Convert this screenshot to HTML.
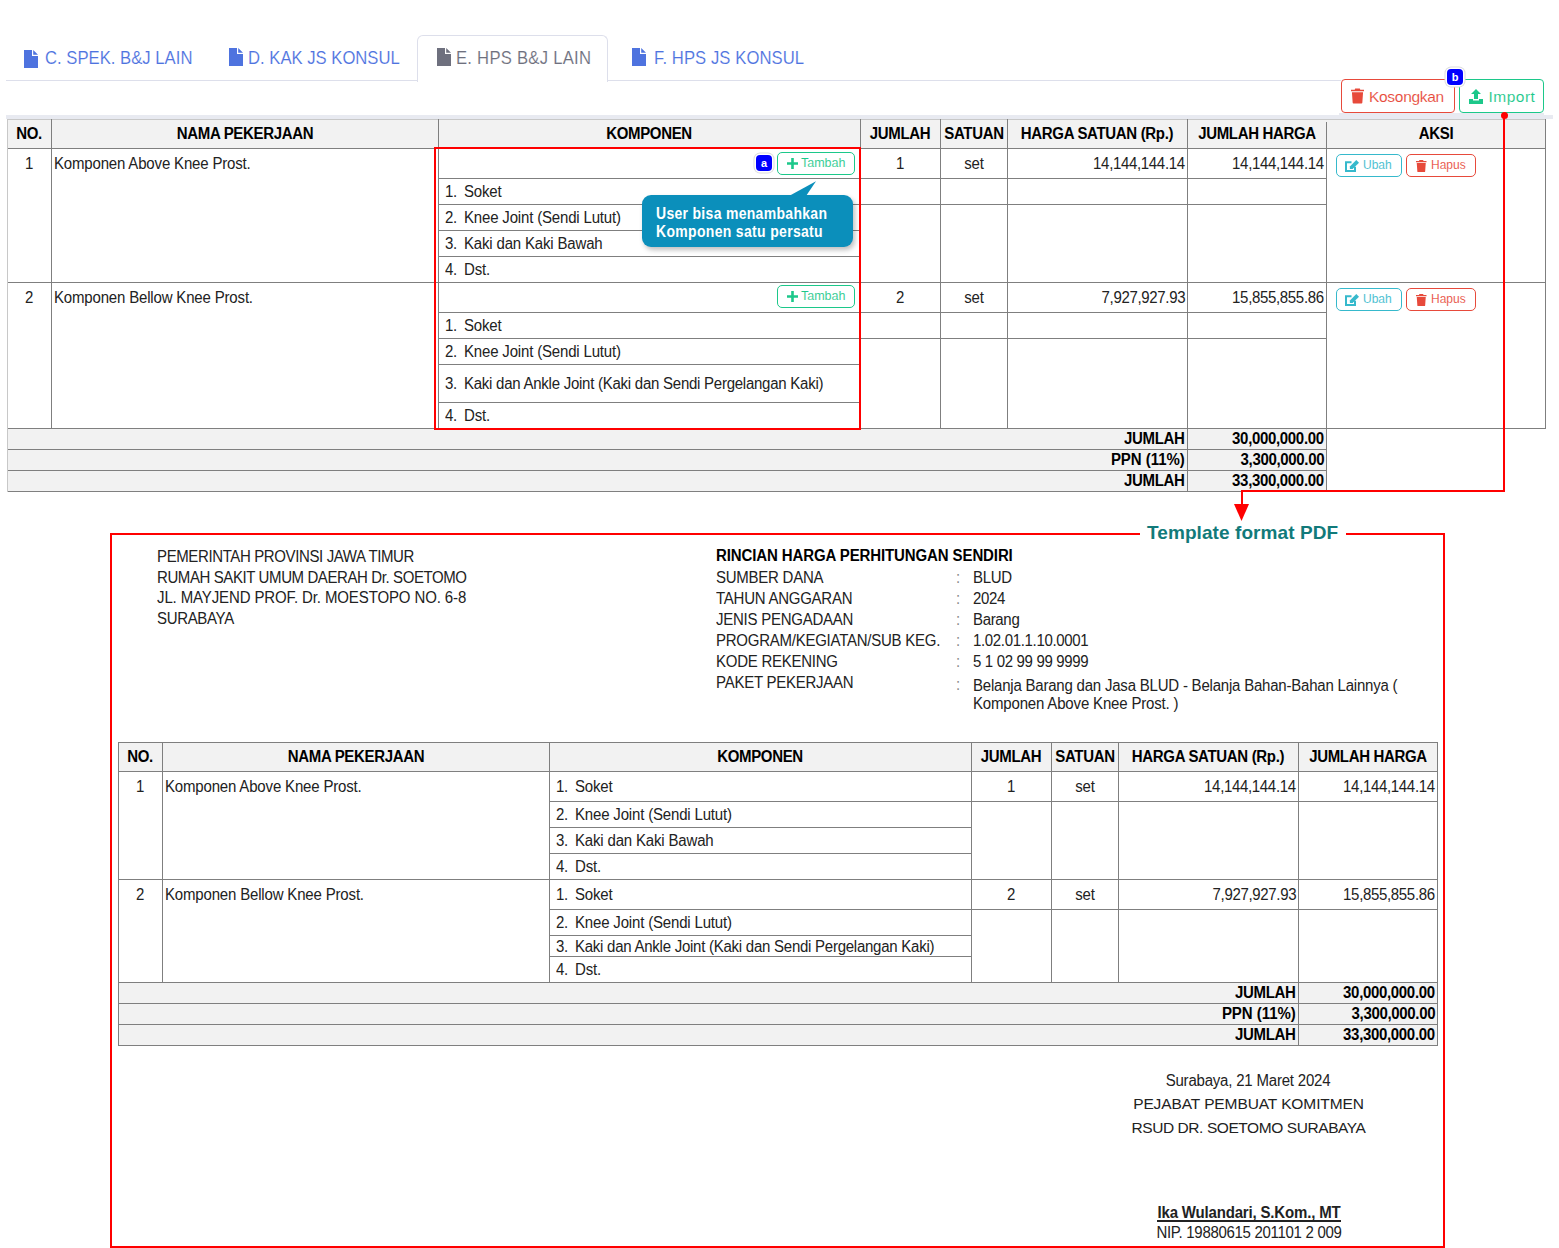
<!DOCTYPE html>
<html><head><meta charset="utf-8"><style>
html,body{margin:0;padding:0;background:#fff;}
body{width:1559px;height:1248px;position:relative;overflow:hidden;font-family:'Liberation Sans', sans-serif;}
body>div,body>svg{position:absolute;}
</style></head><body>
<div style="left:6px;top:80px;width:412px;height:1px;background:#dddfeb;"></div>
<div style="left:607px;top:80px;width:734px;height:1px;background:#dddfeb;"></div>
<div style="left:417px;top:35px;width:189px;height:46px;border:1px solid #dddfeb;border-bottom:none;border-radius:6px 6px 0 0;background:#fff"></div>
<svg style="left:24px;top:50px" width="14" height="18" viewBox="0 0 14 18"><path d="M0 0H8V6H14V18H0Z M9.2 0L14 4.8H9.2Z" fill="#4e73df"/></svg>
<div style="left:44.5px;top:48.54px;font-size:18.500px;line-height:18.500px;font-weight:400;color:#4e73df;letter-spacing:0.020px;font-family:'Liberation Sans', sans-serif;white-space:nowrap;transform:scaleX(0.9);transform-origin:0 0;-webkit-text-stroke:0.12px #fff;">C. SPEK. B&amp;J LAIN</div>
<svg style="left:229px;top:48px" width="14" height="18" viewBox="0 0 14 18"><path d="M0 0H8V6H14V18H0Z M9.2 0L14 4.8H9.2Z" fill="#4e73df"/></svg>
<div style="left:247.5px;top:48.54px;font-size:18.500px;line-height:18.500px;font-weight:400;color:#4e73df;letter-spacing:0.000px;font-family:'Liberation Sans', sans-serif;white-space:nowrap;transform:scaleX(0.9);transform-origin:0 0;-webkit-text-stroke:0.12px #fff;">D. KAK JS KONSUL</div>
<svg style="left:437px;top:48px" width="14" height="18" viewBox="0 0 14 18"><path d="M0 0H8V6H14V18H0Z M9.2 0L14 4.8H9.2Z" fill="#6e707e"/></svg>
<div style="left:456px;top:48.54px;font-size:18.500px;line-height:18.500px;font-weight:400;color:#6e707e;letter-spacing:0.280px;font-family:'Liberation Sans', sans-serif;white-space:nowrap;transform:scaleX(0.9);transform-origin:0 0;-webkit-text-stroke:0.12px #fff;">E. HPS B&amp;J LAIN</div>
<svg style="left:632px;top:48px" width="14" height="18" viewBox="0 0 14 18"><path d="M0 0H8V6H14V18H0Z M9.2 0L14 4.8H9.2Z" fill="#4e73df"/></svg>
<div style="left:654px;top:48.54px;font-size:18.500px;line-height:18.500px;font-weight:400;color:#4e73df;letter-spacing:0.080px;font-family:'Liberation Sans', sans-serif;white-space:nowrap;transform:scaleX(0.9);transform-origin:0 0;-webkit-text-stroke:0.12px #fff;">F. HPS JS KONSUL</div>
<div style="left:6px;top:115px;width:1547px;height:4px;background:#e8eaf1;"></div>
<div style="left:1339px;top:113px;width:205px;height:2px;background:#e8eaf1;"></div>
<div style="left:7px;top:119px;width:1538px;height:29px;background:#f2f2f2;"></div>
<div style="left:7px;top:149px;width:1538px;height:279px;background:#fff;"></div>
<div style="left:7px;top:428px;width:1319px;height:63px;background:#f2f2f2;"></div>
<div style="left:7px;top:119px;width:1538px;height:1px;background:#c8c8c8;"></div>
<div style="left:7px;top:148px;width:1538px;height:1px;background:#7f7f7f;"></div>
<div style="left:7px;top:282px;width:1538px;height:1px;background:#7f7f7f;"></div>
<div style="left:7px;top:428px;width:1538px;height:1px;background:#7f7f7f;"></div>
<div style="left:438px;top:178px;width:422px;height:1px;background:#7f7f7f;"></div>
<div style="left:438px;top:204px;width:422px;height:1px;background:#7f7f7f;"></div>
<div style="left:438px;top:230px;width:422px;height:1px;background:#7f7f7f;"></div>
<div style="left:438px;top:256px;width:422px;height:1px;background:#7f7f7f;"></div>
<div style="left:438px;top:312px;width:422px;height:1px;background:#7f7f7f;"></div>
<div style="left:438px;top:338px;width:422px;height:1px;background:#7f7f7f;"></div>
<div style="left:438px;top:364px;width:422px;height:1px;background:#7f7f7f;"></div>
<div style="left:438px;top:402px;width:422px;height:1px;background:#7f7f7f;"></div>
<div style="left:860px;top:178px;width:466px;height:1px;background:#7f7f7f;"></div>
<div style="left:860px;top:204px;width:466px;height:1px;background:#7f7f7f;"></div>
<div style="left:860px;top:312px;width:466px;height:1px;background:#7f7f7f;"></div>
<div style="left:860px;top:338px;width:466px;height:1px;background:#7f7f7f;"></div>
<div style="left:7px;top:449px;width:1319px;height:1px;background:#7f7f7f;"></div>
<div style="left:7px;top:470px;width:1319px;height:1px;background:#7f7f7f;"></div>
<div style="left:7px;top:491px;width:1320px;height:1px;background:#7f7f7f;"></div>
<div style="left:7px;top:119px;width:1px;height:373px;background:#c8c8c8;"></div>
<div style="left:51px;top:119px;width:1px;height:309px;background:#7f7f7f;"></div>
<div style="left:438px;top:119px;width:1px;height:309px;background:#7f7f7f;"></div>
<div style="left:860px;top:119px;width:1px;height:309px;background:#7f7f7f;"></div>
<div style="left:940px;top:119px;width:1px;height:309px;background:#7f7f7f;"></div>
<div style="left:1007px;top:119px;width:1px;height:309px;background:#7f7f7f;"></div>
<div style="left:1187px;top:119px;width:1px;height:373px;background:#7f7f7f;"></div>
<div style="left:1326px;top:122px;width:1px;height:370px;background:#7f7f7f;"></div>
<div style="left:1545px;top:119px;width:1px;height:310px;background:#7f7f7f;"></div>
<div style="left:-571px;width:1200px;text-align:center;top:126.46px;font-size:16.000px;line-height:16.000px;font-weight:700;color:#000;letter-spacing:-0.352px;font-family:'Liberation Sans', sans-serif;white-space:nowrap;transform:scaleX(0.9375);transform-origin:50% 0;">NO.</div>
<div style="left:-355.5px;width:1200px;text-align:center;top:126.46px;font-size:16.000px;line-height:16.000px;font-weight:700;color:#000;letter-spacing:-0.352px;font-family:'Liberation Sans', sans-serif;white-space:nowrap;transform:scaleX(0.9375);transform-origin:50% 0;">NAMA PEKERJAAN</div>
<div style="left:49px;width:1200px;text-align:center;top:126.46px;font-size:16.000px;line-height:16.000px;font-weight:700;color:#000;letter-spacing:-0.352px;font-family:'Liberation Sans', sans-serif;white-space:nowrap;transform:scaleX(0.9375);transform-origin:50% 0;">KOMPONEN</div>
<div style="left:300px;width:1200px;text-align:center;top:126.46px;font-size:16.000px;line-height:16.000px;font-weight:700;color:#000;letter-spacing:-0.352px;font-family:'Liberation Sans', sans-serif;white-space:nowrap;transform:scaleX(0.9375);transform-origin:50% 0;">JUMLAH</div>
<div style="left:373.5px;width:1200px;text-align:center;top:126.46px;font-size:16.000px;line-height:16.000px;font-weight:700;color:#000;letter-spacing:-0.352px;font-family:'Liberation Sans', sans-serif;white-space:nowrap;transform:scaleX(0.9375);transform-origin:50% 0;">SATUAN</div>
<div style="left:497px;width:1200px;text-align:center;top:126.46px;font-size:16.000px;line-height:16.000px;font-weight:700;color:#000;letter-spacing:-0.352px;font-family:'Liberation Sans', sans-serif;white-space:nowrap;transform:scaleX(0.9375);transform-origin:50% 0;">HARGA SATUAN (Rp.)</div>
<div style="left:656.5px;width:1200px;text-align:center;top:126.46px;font-size:16.000px;line-height:16.000px;font-weight:700;color:#000;letter-spacing:-0.352px;font-family:'Liberation Sans', sans-serif;white-space:nowrap;transform:scaleX(0.9375);transform-origin:50% 0;">JUMLAH HARGA</div>
<div style="left:835.5px;width:1200px;text-align:center;top:126.46px;font-size:16.000px;line-height:16.000px;font-weight:700;color:#000;letter-spacing:-0.352px;font-family:'Liberation Sans', sans-serif;white-space:nowrap;transform:scaleX(0.9375);transform-origin:50% 0;">AKSI</div>
<div style="left:-571px;width:1200px;text-align:center;top:156.46px;font-size:16.000px;line-height:16.000px;font-weight:400;color:#222;letter-spacing:-0.352px;font-family:'Liberation Sans', sans-serif;white-space:nowrap;transform:scaleX(0.9375);transform-origin:50% 0;">1</div>
<div style="left:54px;top:156.46px;font-size:16.000px;line-height:16.000px;font-weight:400;color:#222;letter-spacing:-0.181px;font-family:'Liberation Sans', sans-serif;white-space:nowrap;transform:scaleX(0.9375);transform-origin:0 0;">Komponen Above Knee Prost.</div>
<div style="left:445px;top:184.46px;font-size:16.000px;line-height:16.000px;font-weight:400;color:#222;letter-spacing:-0.352px;font-family:'Liberation Sans', sans-serif;white-space:nowrap;transform:scaleX(0.9375);transform-origin:0 0;">1.</div>
<div style="left:464px;top:184.46px;font-size:16.000px;line-height:16.000px;font-weight:400;color:#222;letter-spacing:-0.181px;font-family:'Liberation Sans', sans-serif;white-space:nowrap;transform:scaleX(0.9375);transform-origin:0 0;">Soket</div>
<div style="left:445px;top:210.46px;font-size:16.000px;line-height:16.000px;font-weight:400;color:#222;letter-spacing:-0.352px;font-family:'Liberation Sans', sans-serif;white-space:nowrap;transform:scaleX(0.9375);transform-origin:0 0;">2.</div>
<div style="left:464px;top:210.46px;font-size:16.000px;line-height:16.000px;font-weight:400;color:#222;letter-spacing:-0.181px;font-family:'Liberation Sans', sans-serif;white-space:nowrap;transform:scaleX(0.9375);transform-origin:0 0;">Knee Joint (Sendi Lutut)</div>
<div style="left:445px;top:236.46px;font-size:16.000px;line-height:16.000px;font-weight:400;color:#222;letter-spacing:-0.352px;font-family:'Liberation Sans', sans-serif;white-space:nowrap;transform:scaleX(0.9375);transform-origin:0 0;">3.</div>
<div style="left:464px;top:236.46px;font-size:16.000px;line-height:16.000px;font-weight:400;color:#222;letter-spacing:-0.181px;font-family:'Liberation Sans', sans-serif;white-space:nowrap;transform:scaleX(0.9375);transform-origin:0 0;">Kaki dan Kaki Bawah</div>
<div style="left:445px;top:262.46px;font-size:16.000px;line-height:16.000px;font-weight:400;color:#222;letter-spacing:-0.352px;font-family:'Liberation Sans', sans-serif;white-space:nowrap;transform:scaleX(0.9375);transform-origin:0 0;">4.</div>
<div style="left:464px;top:262.46px;font-size:16.000px;line-height:16.000px;font-weight:400;color:#222;letter-spacing:-0.181px;font-family:'Liberation Sans', sans-serif;white-space:nowrap;transform:scaleX(0.9375);transform-origin:0 0;">Dst.</div>
<div style="left:300px;width:1200px;text-align:center;top:156.46px;font-size:16.000px;line-height:16.000px;font-weight:400;color:#222;letter-spacing:-0.352px;font-family:'Liberation Sans', sans-serif;white-space:nowrap;transform:scaleX(0.9375);transform-origin:50% 0;">1</div>
<div style="left:373.5px;width:1200px;text-align:center;top:156.46px;font-size:16.000px;line-height:16.000px;font-weight:400;color:#222;letter-spacing:-0.181px;font-family:'Liberation Sans', sans-serif;white-space:nowrap;transform:scaleX(0.9375);transform-origin:50% 0;">set</div>
<div style="right:374px;top:156.46px;font-size:16.000px;line-height:16.000px;font-weight:400;color:#222;letter-spacing:-0.352px;font-family:'Liberation Sans', sans-serif;white-space:nowrap;transform:scaleX(0.9375);transform-origin:100% 0;">14,144,144.14</div>
<div style="right:235px;top:156.46px;font-size:16.000px;line-height:16.000px;font-weight:400;color:#222;letter-spacing:-0.352px;font-family:'Liberation Sans', sans-serif;white-space:nowrap;transform:scaleX(0.9375);transform-origin:100% 0;">14,144,144.14</div>
<div style="left:-571px;width:1200px;text-align:center;top:290.46px;font-size:16.000px;line-height:16.000px;font-weight:400;color:#222;letter-spacing:-0.352px;font-family:'Liberation Sans', sans-serif;white-space:nowrap;transform:scaleX(0.9375);transform-origin:50% 0;">2</div>
<div style="left:54px;top:290.46px;font-size:16.000px;line-height:16.000px;font-weight:400;color:#222;letter-spacing:-0.181px;font-family:'Liberation Sans', sans-serif;white-space:nowrap;transform:scaleX(0.9375);transform-origin:0 0;">Komponen Bellow Knee Prost.</div>
<div style="left:445px;top:318.46px;font-size:16.000px;line-height:16.000px;font-weight:400;color:#222;letter-spacing:-0.352px;font-family:'Liberation Sans', sans-serif;white-space:nowrap;transform:scaleX(0.9375);transform-origin:0 0;">1.</div>
<div style="left:464px;top:318.46px;font-size:16.000px;line-height:16.000px;font-weight:400;color:#222;letter-spacing:-0.181px;font-family:'Liberation Sans', sans-serif;white-space:nowrap;transform:scaleX(0.9375);transform-origin:0 0;">Soket</div>
<div style="left:445px;top:344.46px;font-size:16.000px;line-height:16.000px;font-weight:400;color:#222;letter-spacing:-0.352px;font-family:'Liberation Sans', sans-serif;white-space:nowrap;transform:scaleX(0.9375);transform-origin:0 0;">2.</div>
<div style="left:464px;top:344.46px;font-size:16.000px;line-height:16.000px;font-weight:400;color:#222;letter-spacing:-0.181px;font-family:'Liberation Sans', sans-serif;white-space:nowrap;transform:scaleX(0.9375);transform-origin:0 0;">Knee Joint (Sendi Lutut)</div>
<div style="left:445px;top:376.46px;font-size:16.000px;line-height:16.000px;font-weight:400;color:#222;letter-spacing:-0.352px;font-family:'Liberation Sans', sans-serif;white-space:nowrap;transform:scaleX(0.9375);transform-origin:0 0;">3.</div>
<div style="left:464px;top:376.46px;font-size:16.000px;line-height:16.000px;font-weight:400;color:#222;letter-spacing:-0.267px;font-family:'Liberation Sans', sans-serif;white-space:nowrap;transform:scaleX(0.9375);transform-origin:0 0;">Kaki dan Ankle Joint (Kaki dan Sendi Pergelangan Kaki)</div>
<div style="left:445px;top:408.46px;font-size:16.000px;line-height:16.000px;font-weight:400;color:#222;letter-spacing:-0.352px;font-family:'Liberation Sans', sans-serif;white-space:nowrap;transform:scaleX(0.9375);transform-origin:0 0;">4.</div>
<div style="left:464px;top:408.46px;font-size:16.000px;line-height:16.000px;font-weight:400;color:#222;letter-spacing:-0.181px;font-family:'Liberation Sans', sans-serif;white-space:nowrap;transform:scaleX(0.9375);transform-origin:0 0;">Dst.</div>
<div style="left:300px;width:1200px;text-align:center;top:290.46px;font-size:16.000px;line-height:16.000px;font-weight:400;color:#222;letter-spacing:-0.352px;font-family:'Liberation Sans', sans-serif;white-space:nowrap;transform:scaleX(0.9375);transform-origin:50% 0;">2</div>
<div style="left:373.5px;width:1200px;text-align:center;top:290.46px;font-size:16.000px;line-height:16.000px;font-weight:400;color:#222;letter-spacing:-0.181px;font-family:'Liberation Sans', sans-serif;white-space:nowrap;transform:scaleX(0.9375);transform-origin:50% 0;">set</div>
<div style="right:374px;top:290.46px;font-size:16.000px;line-height:16.000px;font-weight:400;color:#222;letter-spacing:-0.352px;font-family:'Liberation Sans', sans-serif;white-space:nowrap;transform:scaleX(0.9375);transform-origin:100% 0;">7,927,927.93</div>
<div style="right:235px;top:290.46px;font-size:16.000px;line-height:16.000px;font-weight:400;color:#222;letter-spacing:-0.352px;font-family:'Liberation Sans', sans-serif;white-space:nowrap;transform:scaleX(0.9375);transform-origin:100% 0;">15,855,855.86</div>
<div style="right:374px;top:431.46px;font-size:16.000px;line-height:16.000px;font-weight:700;color:#000;letter-spacing:-0.352px;font-family:'Liberation Sans', sans-serif;white-space:nowrap;transform:scaleX(0.9375);transform-origin:100% 0;">JUMLAH</div>
<div style="right:235px;top:431.46px;font-size:16.000px;line-height:16.000px;font-weight:700;color:#000;letter-spacing:-0.352px;font-family:'Liberation Sans', sans-serif;white-space:nowrap;transform:scaleX(0.9375);transform-origin:100% 0;">30,000,000.00</div>
<div style="right:374px;top:452.46px;font-size:16.000px;line-height:16.000px;font-weight:700;color:#000;letter-spacing:-0.053px;font-family:'Liberation Sans', sans-serif;white-space:nowrap;transform:scaleX(0.9375);transform-origin:100% 0;">PPN (11%)</div>
<div style="right:235px;top:452.46px;font-size:16.000px;line-height:16.000px;font-weight:700;color:#000;letter-spacing:-0.352px;font-family:'Liberation Sans', sans-serif;white-space:nowrap;transform:scaleX(0.9375);transform-origin:100% 0;">3,300,000.00</div>
<div style="right:374px;top:473.46px;font-size:16.000px;line-height:16.000px;font-weight:700;color:#000;letter-spacing:-0.352px;font-family:'Liberation Sans', sans-serif;white-space:nowrap;transform:scaleX(0.9375);transform-origin:100% 0;">JUMLAH</div>
<div style="right:235px;top:473.46px;font-size:16.000px;line-height:16.000px;font-weight:700;color:#000;letter-spacing:-0.352px;font-family:'Liberation Sans', sans-serif;white-space:nowrap;transform:scaleX(0.9375);transform-origin:100% 0;">33,300,000.00</div>
<div style="left:777px;top:152px;width:76px;height:21px;border:1px solid #1cc88a;border-radius:5px;background:#fff"></div>
<svg style="left:786.5px;top:157.5px" width="11" height="11" viewBox="0 0 11 11"><path d="M4.2 0H6.8V4.2H11V6.8H6.8V11H4.2V6.8H0V4.2H4.2Z" fill="#1cc88a"/></svg>
<div style="left:801px;top:157.42px;font-size:12.500px;line-height:12.500px;font-weight:400;color:#1cc88a;letter-spacing:0.000px;font-family:'Liberation Sans', sans-serif;white-space:nowrap;-webkit-text-stroke:0.1px #fff;">Tambah</div>
<div style="left:777px;top:285px;width:76px;height:21px;border:1px solid #1cc88a;border-radius:5px;background:#fff"></div>
<svg style="left:786.5px;top:290.5px" width="11" height="11" viewBox="0 0 11 11"><path d="M4.2 0H6.8V4.2H11V6.8H6.8V11H4.2V6.8H0V4.2H4.2Z" fill="#1cc88a"/></svg>
<div style="left:801px;top:290.42px;font-size:12.500px;line-height:12.500px;font-weight:400;color:#1cc88a;letter-spacing:0.000px;font-family:'Liberation Sans', sans-serif;white-space:nowrap;-webkit-text-stroke:0.1px #fff;">Tambah</div>
<div style="left:1336px;top:154px;width:64px;height:21px;border:1px solid #36b9cc;border-radius:5px;background:#fff"></div>
<svg style="left:1345px;top:160px" width="14" height="12" viewBox="0 0 14 12"><path d="M11.3 0L14 2.7L7.6 9.1H4.9V6.4Z" fill="#36b9cc"/><path d="M6.5 2.2H1V11H10V6.8" fill="none" stroke="#36b9cc" stroke-width="2"/></svg>
<div style="left:1363px;top:159.44px;font-size:12.000px;line-height:12.000px;font-weight:400;color:#36b9cc;letter-spacing:0.000px;font-family:'Liberation Sans', sans-serif;white-space:nowrap;-webkit-text-stroke:0.1px #fff;">Ubah</div>
<div style="left:1406px;top:154px;width:68px;height:21px;border:1px solid #e74a3b;border-radius:5px;background:#fff"></div>
<svg style="left:1416px;top:159.5px" width="10.5" height="12" viewBox="0 0 14 16"><path d="M4.5 0H9.5L10 1.2H14V3H0V1.2H4Z M1 4H13L12.2 15.2Q12.1 16 11.3 16H2.7Q1.9 16 1.8 15.2Z" fill="#e74a3b"/></svg>
<div style="left:1431px;top:159.44px;font-size:12.000px;line-height:12.000px;font-weight:400;color:#e74a3b;letter-spacing:0.000px;font-family:'Liberation Sans', sans-serif;white-space:nowrap;-webkit-text-stroke:0.1px #fff;">Hapus</div>
<div style="left:1336px;top:288px;width:64px;height:21px;border:1px solid #36b9cc;border-radius:5px;background:#fff"></div>
<svg style="left:1345px;top:294px" width="14" height="12" viewBox="0 0 14 12"><path d="M11.3 0L14 2.7L7.6 9.1H4.9V6.4Z" fill="#36b9cc"/><path d="M6.5 2.2H1V11H10V6.8" fill="none" stroke="#36b9cc" stroke-width="2"/></svg>
<div style="left:1363px;top:293.44px;font-size:12.000px;line-height:12.000px;font-weight:400;color:#36b9cc;letter-spacing:0.000px;font-family:'Liberation Sans', sans-serif;white-space:nowrap;-webkit-text-stroke:0.1px #fff;">Ubah</div>
<div style="left:1406px;top:288px;width:68px;height:21px;border:1px solid #e74a3b;border-radius:5px;background:#fff"></div>
<svg style="left:1416px;top:293.5px" width="10.5" height="12" viewBox="0 0 14 16"><path d="M4.5 0H9.5L10 1.2H14V3H0V1.2H4Z M1 4H13L12.2 15.2Q12.1 16 11.3 16H2.7Q1.9 16 1.8 15.2Z" fill="#e74a3b"/></svg>
<div style="left:1431px;top:293.44px;font-size:12.000px;line-height:12.000px;font-weight:400;color:#e74a3b;letter-spacing:0.000px;font-family:'Liberation Sans', sans-serif;white-space:nowrap;-webkit-text-stroke:0.1px #fff;">Hapus</div>
<div style="left:1341px;top:79px;width:112px;height:32px;border:1px solid #e74a3b;border-radius:4px;background:#fff"></div>
<svg style="left:1351px;top:88px" width="13" height="16" viewBox="0 0 14 16"><path d="M4.5 0H9.5L10 1.2H14V3H0V1.2H4Z M1 4H13L12.2 15.2Q12.1 16 11.3 16H2.7Q1.9 16 1.8 15.2Z" fill="#e74a3b"/></svg>
<div style="left:1369px;top:88.88px;font-size:15.500px;line-height:15.500px;font-weight:400;color:#e74a3b;letter-spacing:-0.300px;font-family:'Liberation Sans', sans-serif;white-space:nowrap;-webkit-text-stroke:0.1px #fff;">Kosongkan</div>
<div style="left:1459px;top:79px;width:83px;height:32px;border:1px solid #1cc88a;border-radius:4px;background:#fff"></div>
<svg style="left:1469px;top:89px" width="14" height="15" viewBox="0 0 14 15"><path d="M7 0L12 5H9V10H5V5H2Z M0 10H4V11.5H10V10H14V15H0Z" fill="#1cc88a"/></svg>
<div style="left:1488.5px;top:88.88px;font-size:15.500px;line-height:15.500px;font-weight:400;color:#1cc88a;letter-spacing:0.500px;font-family:'Liberation Sans', sans-serif;white-space:nowrap;-webkit-text-stroke:0.1px #fff;">Import</div>
<div style="left:756px;top:155px;width:16px;height:16px;border-radius:4px;background:#0000ff;box-shadow:0 0 0 1.5px #fff,0 0 0 2.5px #dcdcdc;color:#fff;font:bold 11px/16px 'Liberation Sans', sans-serif;text-align:center">a</div>
<div style="left:1447px;top:69px;width:16px;height:16px;border-radius:4px;background:#0000ff;box-shadow:0 0 0 1.5px #fff,0 0 0 2.5px #dcdcdc;color:#fff;font:bold 11px/16px 'Liberation Sans', sans-serif;text-align:center">b</div>
<div style="left:642px;top:195px;width:211px;height:52px;background:#0b8fbb;border-radius:9px;box-shadow:2px 3px 5px rgba(0,0,0,0.25)"></div>
<svg style="left:780px;top:180px" width="40" height="20" viewBox="0 0 40 20"><path d="M9 16L36 1.2L26 16Z" fill="#0b8fbb"/></svg>
<div style="left:656px;top:207.15px;font-size:14.000px;line-height:14.000px;font-weight:700;color:#fff;letter-spacing:0.300px;font-family:'Liberation Sans', sans-serif;white-space:nowrap;transform:scaleY(1.12);transform-origin:0 11.85px;">User bisa menambahkan</div>
<div style="left:656px;top:225.15px;font-size:14.000px;line-height:14.000px;font-weight:700;color:#fff;letter-spacing:0.320px;font-family:'Liberation Sans', sans-serif;white-space:nowrap;transform:scaleY(1.12);transform-origin:0 11.85px;">Komponen satu persatu</div>
<div style="left:434px;top:147px;width:427px;height:2px;background:#ff0000;"></div>
<div style="left:434px;top:428px;width:427px;height:2px;background:#ff0000;"></div>
<div style="left:434px;top:147px;width:2px;height:283px;background:#ff0000;"></div>
<div style="left:859px;top:147px;width:2px;height:283px;background:#ff0000;"></div>
<div style="left:1501px;top:112.2px;width:7px;height:7px;border-radius:50%;background:#ff0000"></div>
<div style="left:1503px;top:116px;width:2px;height:376px;background:#ff0000;"></div>
<div style="left:1241px;top:490px;width:264px;height:2px;background:#ff0000;"></div>
<div style="left:1241px;top:490px;width:2px;height:16px;background:#ff0000;"></div>
<svg style="left:1234px;top:504px" width="16" height="17" viewBox="0 0 16 17"><path d="M0 0H15L7.5 17Z" fill="#ff0000"/></svg>
<div style="left:110px;top:533px;width:1030px;height:2px;background:#ff0000;"></div>
<div style="left:1346px;top:533px;width:99px;height:2px;background:#ff0000;"></div>
<div style="left:110px;top:533px;width:2px;height:715px;background:#ff0000;"></div>
<div style="left:1443px;top:533px;width:2px;height:715px;background:#ff0000;"></div>
<div style="left:110px;top:1246px;width:1335px;height:2px;background:#ff0000;"></div>
<div style="left:1147px;top:522.92px;font-size:19.000px;line-height:19.000px;font-weight:700;color:#117a7a;letter-spacing:0.080px;font-family:'Liberation Sans', sans-serif;white-space:nowrap;">Template format PDF</div>
<div style="left:157px;top:549.46px;font-size:16.000px;line-height:16.000px;font-weight:400;color:#222;letter-spacing:-0.405px;font-family:'Liberation Sans', sans-serif;white-space:nowrap;transform:scaleX(0.9375);transform-origin:0 0;">PEMERINTAH PROVINSI JAWA TIMUR</div>
<div style="left:157px;top:570.46px;font-size:16.000px;line-height:16.000px;font-weight:400;color:#222;letter-spacing:-0.427px;font-family:'Liberation Sans', sans-serif;white-space:nowrap;transform:scaleX(0.9375);transform-origin:0 0;">RUMAH SAKIT UMUM DAERAH Dr. SOETOMO</div>
<div style="left:157px;top:590.46px;font-size:16.000px;line-height:16.000px;font-weight:400;color:#222;letter-spacing:-0.128px;font-family:'Liberation Sans', sans-serif;white-space:nowrap;transform:scaleX(0.9375);transform-origin:0 0;">JL. MAYJEND PROF. Dr. MOESTOPO NO. 6-8</div>
<div style="left:157px;top:611.46px;font-size:16.000px;line-height:16.000px;font-weight:400;color:#222;letter-spacing:-0.352px;font-family:'Liberation Sans', sans-serif;white-space:nowrap;transform:scaleX(0.9375);transform-origin:0 0;">SURABAYA</div>
<div style="left:716px;top:548.46px;font-size:16.000px;line-height:16.000px;font-weight:700;color:#000;letter-spacing:-0.117px;font-family:'Liberation Sans', sans-serif;white-space:nowrap;transform:scaleX(0.9375);transform-origin:0 0;">RINCIAN HARGA PERHITUNGAN SENDIRI</div>
<div style="left:716px;top:570.46px;font-size:16.000px;line-height:16.000px;font-weight:400;color:#222;letter-spacing:-0.267px;font-family:'Liberation Sans', sans-serif;white-space:nowrap;transform:scaleX(0.9375);transform-origin:0 0;">SUMBER DANA</div>
<div style="left:956px;top:570.46px;font-size:16.000px;line-height:16.000px;font-weight:400;color:#8a8a8a;letter-spacing:0.000px;font-family:'Liberation Sans', sans-serif;white-space:nowrap;transform:scaleX(0.9375);transform-origin:0 0;">:</div>
<div style="left:973px;top:570.46px;font-size:16.000px;line-height:16.000px;font-weight:400;color:#222;letter-spacing:-0.352px;font-family:'Liberation Sans', sans-serif;white-space:nowrap;transform:scaleX(0.9375);transform-origin:0 0;">BLUD</div>
<div style="left:716px;top:591.46px;font-size:16.000px;line-height:16.000px;font-weight:400;color:#222;letter-spacing:-0.267px;font-family:'Liberation Sans', sans-serif;white-space:nowrap;transform:scaleX(0.9375);transform-origin:0 0;">TAHUN ANGGARAN</div>
<div style="left:956px;top:591.46px;font-size:16.000px;line-height:16.000px;font-weight:400;color:#8a8a8a;letter-spacing:0.000px;font-family:'Liberation Sans', sans-serif;white-space:nowrap;transform:scaleX(0.9375);transform-origin:0 0;">:</div>
<div style="left:973px;top:591.46px;font-size:16.000px;line-height:16.000px;font-weight:400;color:#222;letter-spacing:-0.352px;font-family:'Liberation Sans', sans-serif;white-space:nowrap;transform:scaleX(0.9375);transform-origin:0 0;">2024</div>
<div style="left:716px;top:612.46px;font-size:16.000px;line-height:16.000px;font-weight:400;color:#222;letter-spacing:-0.267px;font-family:'Liberation Sans', sans-serif;white-space:nowrap;transform:scaleX(0.9375);transform-origin:0 0;">JENIS PENGADAAN</div>
<div style="left:956px;top:612.46px;font-size:16.000px;line-height:16.000px;font-weight:400;color:#8a8a8a;letter-spacing:0.000px;font-family:'Liberation Sans', sans-serif;white-space:nowrap;transform:scaleX(0.9375);transform-origin:0 0;">:</div>
<div style="left:973px;top:612.46px;font-size:16.000px;line-height:16.000px;font-weight:400;color:#222;letter-spacing:-0.352px;font-family:'Liberation Sans', sans-serif;white-space:nowrap;transform:scaleX(0.9375);transform-origin:0 0;">Barang</div>
<div style="left:716px;top:633.46px;font-size:16.000px;line-height:16.000px;font-weight:400;color:#222;letter-spacing:-0.267px;font-family:'Liberation Sans', sans-serif;white-space:nowrap;transform:scaleX(0.9375);transform-origin:0 0;">PROGRAM/KEGIATAN/SUB KEG.</div>
<div style="left:956px;top:633.46px;font-size:16.000px;line-height:16.000px;font-weight:400;color:#8a8a8a;letter-spacing:0.000px;font-family:'Liberation Sans', sans-serif;white-space:nowrap;transform:scaleX(0.9375);transform-origin:0 0;">:</div>
<div style="left:973px;top:633.46px;font-size:16.000px;line-height:16.000px;font-weight:400;color:#222;letter-spacing:-0.352px;font-family:'Liberation Sans', sans-serif;white-space:nowrap;transform:scaleX(0.9375);transform-origin:0 0;">1.02.01.1.10.0001</div>
<div style="left:716px;top:654.46px;font-size:16.000px;line-height:16.000px;font-weight:400;color:#222;letter-spacing:-0.267px;font-family:'Liberation Sans', sans-serif;white-space:nowrap;transform:scaleX(0.9375);transform-origin:0 0;">KODE REKENING</div>
<div style="left:956px;top:654.46px;font-size:16.000px;line-height:16.000px;font-weight:400;color:#8a8a8a;letter-spacing:0.000px;font-family:'Liberation Sans', sans-serif;white-space:nowrap;transform:scaleX(0.9375);transform-origin:0 0;">:</div>
<div style="left:973px;top:654.46px;font-size:16.000px;line-height:16.000px;font-weight:400;color:#222;letter-spacing:-0.352px;font-family:'Liberation Sans', sans-serif;white-space:nowrap;transform:scaleX(0.9375);transform-origin:0 0;">5 1 02 99 99 9999</div>
<div style="left:716px;top:675.46px;font-size:16.000px;line-height:16.000px;font-weight:400;color:#222;letter-spacing:-0.267px;font-family:'Liberation Sans', sans-serif;white-space:nowrap;transform:scaleX(0.9375);transform-origin:0 0;">PAKET PEKERJAAN</div>
<div style="left:956px;top:677.46px;font-size:16.000px;line-height:16.000px;font-weight:400;color:#8a8a8a;letter-spacing:0.000px;font-family:'Liberation Sans', sans-serif;white-space:nowrap;transform:scaleX(0.9375);transform-origin:0 0;">:</div>
<div style="left:973px;top:678.46px;font-size:16.000px;line-height:16.000px;font-weight:400;color:#222;letter-spacing:-0.224px;font-family:'Liberation Sans', sans-serif;white-space:nowrap;transform:scaleX(0.9375);transform-origin:0 0;">Belanja Barang dan Jasa BLUD - Belanja Bahan-Bahan Lainnya (</div>
<div style="left:973px;top:696.46px;font-size:16.000px;line-height:16.000px;font-weight:400;color:#222;letter-spacing:-0.181px;font-family:'Liberation Sans', sans-serif;white-space:nowrap;transform:scaleX(0.9375);transform-origin:0 0;">Komponen Above Knee Prost. )</div>
<div style="left:118px;top:742px;width:1319px;height:29px;background:#f2f2f2;"></div>
<div style="left:118px;top:982px;width:1319px;height:63px;background:#f2f2f2;"></div>
<div style="left:118px;top:742px;width:1320px;height:1px;background:#7f7f7f;"></div>
<div style="left:118px;top:771px;width:1320px;height:1px;background:#7f7f7f;"></div>
<div style="left:118px;top:879px;width:1320px;height:1px;background:#7f7f7f;"></div>
<div style="left:118px;top:982px;width:1320px;height:1px;background:#7f7f7f;"></div>
<div style="left:549px;top:827px;width:422px;height:1px;background:#7f7f7f;"></div>
<div style="left:549px;top:853px;width:422px;height:1px;background:#7f7f7f;"></div>
<div style="left:549px;top:801px;width:889px;height:1px;background:#7f7f7f;"></div>
<div style="left:549px;top:909px;width:422px;height:1px;background:#7f7f7f;"></div>
<div style="left:549px;top:935px;width:422px;height:1px;background:#7f7f7f;"></div>
<div style="left:549px;top:956px;width:422px;height:1px;background:#7f7f7f;"></div>
<div style="left:971px;top:909px;width:467px;height:1px;background:#7f7f7f;"></div>
<div style="left:118px;top:1003px;width:1320px;height:1px;background:#7f7f7f;"></div>
<div style="left:118px;top:1024px;width:1320px;height:1px;background:#7f7f7f;"></div>
<div style="left:118px;top:1045px;width:1320px;height:1px;background:#7f7f7f;"></div>
<div style="left:118px;top:742px;width:1px;height:304px;background:#7f7f7f;"></div>
<div style="left:162px;top:742px;width:1px;height:240px;background:#7f7f7f;"></div>
<div style="left:549px;top:742px;width:1px;height:240px;background:#7f7f7f;"></div>
<div style="left:971px;top:742px;width:1px;height:240px;background:#7f7f7f;"></div>
<div style="left:1051px;top:742px;width:1px;height:240px;background:#7f7f7f;"></div>
<div style="left:1118px;top:742px;width:1px;height:240px;background:#7f7f7f;"></div>
<div style="left:1298px;top:742px;width:1px;height:304px;background:#7f7f7f;"></div>
<div style="left:1437px;top:742px;width:1px;height:304px;background:#7f7f7f;"></div>
<div style="left:-460px;width:1200px;text-align:center;top:749.46px;font-size:16.000px;line-height:16.000px;font-weight:700;color:#000;letter-spacing:-0.352px;font-family:'Liberation Sans', sans-serif;white-space:nowrap;transform:scaleX(0.9375);transform-origin:50% 0;">NO.</div>
<div style="left:-244.5px;width:1200px;text-align:center;top:749.46px;font-size:16.000px;line-height:16.000px;font-weight:700;color:#000;letter-spacing:-0.352px;font-family:'Liberation Sans', sans-serif;white-space:nowrap;transform:scaleX(0.9375);transform-origin:50% 0;">NAMA PEKERJAAN</div>
<div style="left:160px;width:1200px;text-align:center;top:749.46px;font-size:16.000px;line-height:16.000px;font-weight:700;color:#000;letter-spacing:-0.352px;font-family:'Liberation Sans', sans-serif;white-space:nowrap;transform:scaleX(0.9375);transform-origin:50% 0;">KOMPONEN</div>
<div style="left:411px;width:1200px;text-align:center;top:749.46px;font-size:16.000px;line-height:16.000px;font-weight:700;color:#000;letter-spacing:-0.352px;font-family:'Liberation Sans', sans-serif;white-space:nowrap;transform:scaleX(0.9375);transform-origin:50% 0;">JUMLAH</div>
<div style="left:484.5px;width:1200px;text-align:center;top:749.46px;font-size:16.000px;line-height:16.000px;font-weight:700;color:#000;letter-spacing:-0.352px;font-family:'Liberation Sans', sans-serif;white-space:nowrap;transform:scaleX(0.9375);transform-origin:50% 0;">SATUAN</div>
<div style="left:608px;width:1200px;text-align:center;top:749.46px;font-size:16.000px;line-height:16.000px;font-weight:700;color:#000;letter-spacing:-0.352px;font-family:'Liberation Sans', sans-serif;white-space:nowrap;transform:scaleX(0.9375);transform-origin:50% 0;">HARGA SATUAN (Rp.)</div>
<div style="left:767.5px;width:1200px;text-align:center;top:749.46px;font-size:16.000px;line-height:16.000px;font-weight:700;color:#000;letter-spacing:-0.352px;font-family:'Liberation Sans', sans-serif;white-space:nowrap;transform:scaleX(0.9375);transform-origin:50% 0;">JUMLAH HARGA</div>
<div style="left:-460px;width:1200px;text-align:center;top:779.46px;font-size:16.000px;line-height:16.000px;font-weight:400;color:#222;letter-spacing:-0.352px;font-family:'Liberation Sans', sans-serif;white-space:nowrap;transform:scaleX(0.9375);transform-origin:50% 0;">1</div>
<div style="left:165px;top:779.46px;font-size:16.000px;line-height:16.000px;font-weight:400;color:#222;letter-spacing:-0.181px;font-family:'Liberation Sans', sans-serif;white-space:nowrap;transform:scaleX(0.9375);transform-origin:0 0;">Komponen Above Knee Prost.</div>
<div style="left:556px;top:779.46px;font-size:16.000px;line-height:16.000px;font-weight:400;color:#222;letter-spacing:-0.352px;font-family:'Liberation Sans', sans-serif;white-space:nowrap;transform:scaleX(0.9375);transform-origin:0 0;">1.</div>
<div style="left:575px;top:779.46px;font-size:16.000px;line-height:16.000px;font-weight:400;color:#222;letter-spacing:-0.181px;font-family:'Liberation Sans', sans-serif;white-space:nowrap;transform:scaleX(0.9375);transform-origin:0 0;">Soket</div>
<div style="left:556px;top:807.46px;font-size:16.000px;line-height:16.000px;font-weight:400;color:#222;letter-spacing:-0.352px;font-family:'Liberation Sans', sans-serif;white-space:nowrap;transform:scaleX(0.9375);transform-origin:0 0;">2.</div>
<div style="left:575px;top:807.46px;font-size:16.000px;line-height:16.000px;font-weight:400;color:#222;letter-spacing:-0.181px;font-family:'Liberation Sans', sans-serif;white-space:nowrap;transform:scaleX(0.9375);transform-origin:0 0;">Knee Joint (Sendi Lutut)</div>
<div style="left:556px;top:833.46px;font-size:16.000px;line-height:16.000px;font-weight:400;color:#222;letter-spacing:-0.352px;font-family:'Liberation Sans', sans-serif;white-space:nowrap;transform:scaleX(0.9375);transform-origin:0 0;">3.</div>
<div style="left:575px;top:833.46px;font-size:16.000px;line-height:16.000px;font-weight:400;color:#222;letter-spacing:-0.181px;font-family:'Liberation Sans', sans-serif;white-space:nowrap;transform:scaleX(0.9375);transform-origin:0 0;">Kaki dan Kaki Bawah</div>
<div style="left:556px;top:859.46px;font-size:16.000px;line-height:16.000px;font-weight:400;color:#222;letter-spacing:-0.352px;font-family:'Liberation Sans', sans-serif;white-space:nowrap;transform:scaleX(0.9375);transform-origin:0 0;">4.</div>
<div style="left:575px;top:859.46px;font-size:16.000px;line-height:16.000px;font-weight:400;color:#222;letter-spacing:-0.181px;font-family:'Liberation Sans', sans-serif;white-space:nowrap;transform:scaleX(0.9375);transform-origin:0 0;">Dst.</div>
<div style="left:411px;width:1200px;text-align:center;top:779.46px;font-size:16.000px;line-height:16.000px;font-weight:400;color:#222;letter-spacing:-0.352px;font-family:'Liberation Sans', sans-serif;white-space:nowrap;transform:scaleX(0.9375);transform-origin:50% 0;">1</div>
<div style="left:484.5px;width:1200px;text-align:center;top:779.46px;font-size:16.000px;line-height:16.000px;font-weight:400;color:#222;letter-spacing:-0.181px;font-family:'Liberation Sans', sans-serif;white-space:nowrap;transform:scaleX(0.9375);transform-origin:50% 0;">set</div>
<div style="right:263px;top:779.46px;font-size:16.000px;line-height:16.000px;font-weight:400;color:#222;letter-spacing:-0.352px;font-family:'Liberation Sans', sans-serif;white-space:nowrap;transform:scaleX(0.9375);transform-origin:100% 0;">14,144,144.14</div>
<div style="right:124px;top:779.46px;font-size:16.000px;line-height:16.000px;font-weight:400;color:#222;letter-spacing:-0.352px;font-family:'Liberation Sans', sans-serif;white-space:nowrap;transform:scaleX(0.9375);transform-origin:100% 0;">14,144,144.14</div>
<div style="left:-460px;width:1200px;text-align:center;top:887.46px;font-size:16.000px;line-height:16.000px;font-weight:400;color:#222;letter-spacing:-0.352px;font-family:'Liberation Sans', sans-serif;white-space:nowrap;transform:scaleX(0.9375);transform-origin:50% 0;">2</div>
<div style="left:165px;top:887.46px;font-size:16.000px;line-height:16.000px;font-weight:400;color:#222;letter-spacing:-0.181px;font-family:'Liberation Sans', sans-serif;white-space:nowrap;transform:scaleX(0.9375);transform-origin:0 0;">Komponen Bellow Knee Prost.</div>
<div style="left:556px;top:887.46px;font-size:16.000px;line-height:16.000px;font-weight:400;color:#222;letter-spacing:-0.352px;font-family:'Liberation Sans', sans-serif;white-space:nowrap;transform:scaleX(0.9375);transform-origin:0 0;">1.</div>
<div style="left:575px;top:887.46px;font-size:16.000px;line-height:16.000px;font-weight:400;color:#222;letter-spacing:-0.181px;font-family:'Liberation Sans', sans-serif;white-space:nowrap;transform:scaleX(0.9375);transform-origin:0 0;">Soket</div>
<div style="left:556px;top:915.46px;font-size:16.000px;line-height:16.000px;font-weight:400;color:#222;letter-spacing:-0.352px;font-family:'Liberation Sans', sans-serif;white-space:nowrap;transform:scaleX(0.9375);transform-origin:0 0;">2.</div>
<div style="left:575px;top:915.46px;font-size:16.000px;line-height:16.000px;font-weight:400;color:#222;letter-spacing:-0.181px;font-family:'Liberation Sans', sans-serif;white-space:nowrap;transform:scaleX(0.9375);transform-origin:0 0;">Knee Joint (Sendi Lutut)</div>
<div style="left:556px;top:939.46px;font-size:16.000px;line-height:16.000px;font-weight:400;color:#222;letter-spacing:-0.352px;font-family:'Liberation Sans', sans-serif;white-space:nowrap;transform:scaleX(0.9375);transform-origin:0 0;">3.</div>
<div style="left:575px;top:939.46px;font-size:16.000px;line-height:16.000px;font-weight:400;color:#222;letter-spacing:-0.267px;font-family:'Liberation Sans', sans-serif;white-space:nowrap;transform:scaleX(0.9375);transform-origin:0 0;">Kaki dan Ankle Joint (Kaki dan Sendi Pergelangan Kaki)</div>
<div style="left:556px;top:962.46px;font-size:16.000px;line-height:16.000px;font-weight:400;color:#222;letter-spacing:-0.352px;font-family:'Liberation Sans', sans-serif;white-space:nowrap;transform:scaleX(0.9375);transform-origin:0 0;">4.</div>
<div style="left:575px;top:962.46px;font-size:16.000px;line-height:16.000px;font-weight:400;color:#222;letter-spacing:-0.181px;font-family:'Liberation Sans', sans-serif;white-space:nowrap;transform:scaleX(0.9375);transform-origin:0 0;">Dst.</div>
<div style="left:411px;width:1200px;text-align:center;top:887.46px;font-size:16.000px;line-height:16.000px;font-weight:400;color:#222;letter-spacing:-0.352px;font-family:'Liberation Sans', sans-serif;white-space:nowrap;transform:scaleX(0.9375);transform-origin:50% 0;">2</div>
<div style="left:484.5px;width:1200px;text-align:center;top:887.46px;font-size:16.000px;line-height:16.000px;font-weight:400;color:#222;letter-spacing:-0.181px;font-family:'Liberation Sans', sans-serif;white-space:nowrap;transform:scaleX(0.9375);transform-origin:50% 0;">set</div>
<div style="right:263px;top:887.46px;font-size:16.000px;line-height:16.000px;font-weight:400;color:#222;letter-spacing:-0.352px;font-family:'Liberation Sans', sans-serif;white-space:nowrap;transform:scaleX(0.9375);transform-origin:100% 0;">7,927,927.93</div>
<div style="right:124px;top:887.46px;font-size:16.000px;line-height:16.000px;font-weight:400;color:#222;letter-spacing:-0.352px;font-family:'Liberation Sans', sans-serif;white-space:nowrap;transform:scaleX(0.9375);transform-origin:100% 0;">15,855,855.86</div>
<div style="right:263px;top:985.46px;font-size:16.000px;line-height:16.000px;font-weight:700;color:#000;letter-spacing:-0.352px;font-family:'Liberation Sans', sans-serif;white-space:nowrap;transform:scaleX(0.9375);transform-origin:100% 0;">JUMLAH</div>
<div style="right:124px;top:985.46px;font-size:16.000px;line-height:16.000px;font-weight:700;color:#000;letter-spacing:-0.352px;font-family:'Liberation Sans', sans-serif;white-space:nowrap;transform:scaleX(0.9375);transform-origin:100% 0;">30,000,000.00</div>
<div style="right:263px;top:1006.46px;font-size:16.000px;line-height:16.000px;font-weight:700;color:#000;letter-spacing:-0.053px;font-family:'Liberation Sans', sans-serif;white-space:nowrap;transform:scaleX(0.9375);transform-origin:100% 0;">PPN (11%)</div>
<div style="right:124px;top:1006.46px;font-size:16.000px;line-height:16.000px;font-weight:700;color:#000;letter-spacing:-0.352px;font-family:'Liberation Sans', sans-serif;white-space:nowrap;transform:scaleX(0.9375);transform-origin:100% 0;">3,300,000.00</div>
<div style="right:263px;top:1027.46px;font-size:16.000px;line-height:16.000px;font-weight:700;color:#000;letter-spacing:-0.352px;font-family:'Liberation Sans', sans-serif;white-space:nowrap;transform:scaleX(0.9375);transform-origin:100% 0;">JUMLAH</div>
<div style="right:124px;top:1027.46px;font-size:16.000px;line-height:16.000px;font-weight:700;color:#000;letter-spacing:-0.352px;font-family:'Liberation Sans', sans-serif;white-space:nowrap;transform:scaleX(0.9375);transform-origin:100% 0;">33,300,000.00</div>
<div style="left:648px;width:1200px;text-align:center;top:1073.46px;font-size:16.000px;line-height:16.000px;font-weight:400;color:#222;letter-spacing:-0.213px;font-family:'Liberation Sans', sans-serif;white-space:nowrap;transform:scaleX(0.9375);transform-origin:50% 0;">Surabaya, 21 Maret 2024</div>
<div style="left:648.5px;width:1200px;text-align:center;top:1095.88px;font-size:15.500px;line-height:15.500px;font-weight:400;color:#222;letter-spacing:-0.100px;font-family:'Liberation Sans', sans-serif;white-space:nowrap;">PEJABAT PEMBUAT KOMITMEN</div>
<div style="left:648.5px;width:1200px;text-align:center;top:1119.88px;font-size:15.500px;line-height:15.500px;font-weight:400;color:#222;letter-spacing:-0.420px;font-family:'Liberation Sans', sans-serif;white-space:nowrap;">RSUD DR. SOETOMO SURABAYA</div>
<div style="left:648.5px;width:1200px;text-align:center;top:1205.46px;font-size:16.000px;line-height:16.000px;font-weight:700;color:#222;letter-spacing:-0.181px;font-family:'Liberation Sans', sans-serif;white-space:nowrap;transform:scaleX(0.9375);transform-origin:50% 0;">Ika Wulandari, S.Kom., MT</div>
<div style="left:1157px;top:1220px;width:184px;height:2px;background:#222;"></div>
<div style="left:648.5px;width:1200px;text-align:center;top:1225.46px;font-size:16.000px;line-height:16.000px;font-weight:400;color:#222;letter-spacing:-0.320px;font-family:'Liberation Sans', sans-serif;white-space:nowrap;transform:scaleX(0.9375);transform-origin:50% 0;">NIP. 19880615 201101 2 009</div>
</body></html>
